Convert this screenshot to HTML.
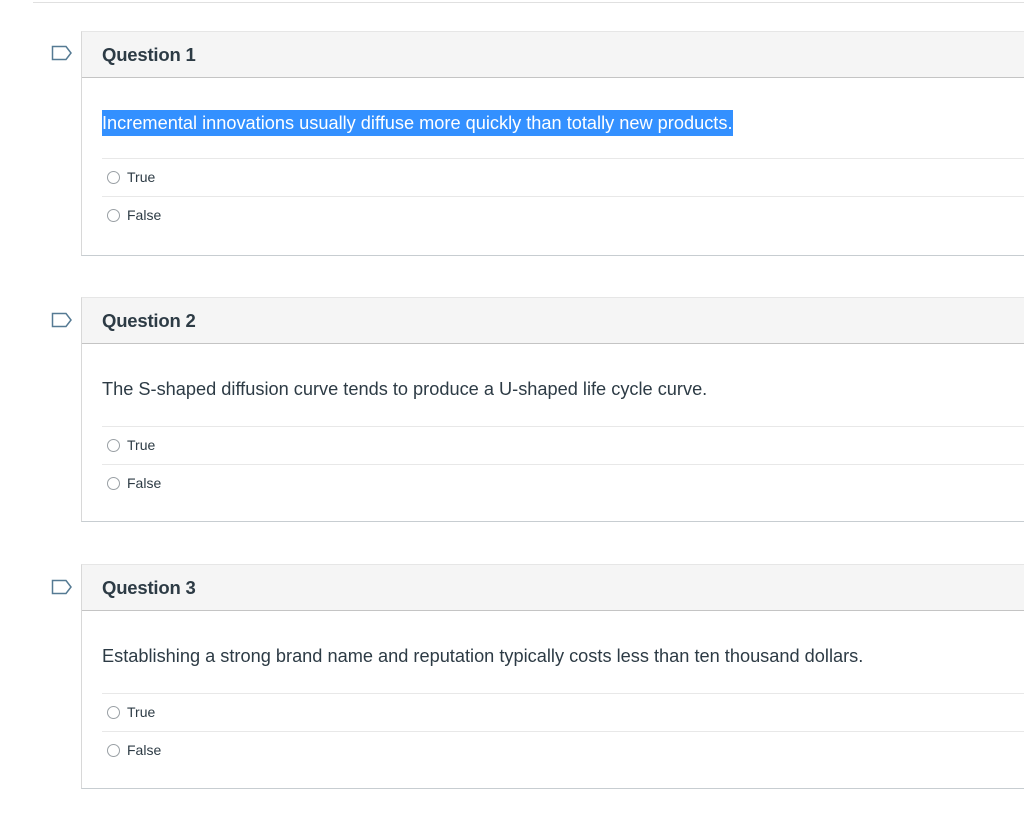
<!DOCTYPE html>
<html><head><meta charset="utf-8"><style>
body{margin:0;background:#fff;font-family:"Liberation Sans",sans-serif;color:#2d3b45;}
.top{position:absolute;left:33px;top:2px;width:991px;height:1px;background:#e0e0e0}
.q{position:absolute;left:81px;width:943px;height:223px;border-left:1px solid #d8d8d8;border-top:1px solid #e6e6e6;border-bottom:1px solid #c7cdd1}
.hd{height:45px;background:#f5f5f5;border-bottom:1px solid #c4c4c4}
.hd span{position:absolute;left:20px;top:12px;font-size:18.5px;font-weight:bold;color:#2d3b45;letter-spacing:-0.2px}
.txt{position:absolute;left:20px;top:79px;font-size:18.2px;letter-spacing:0;line-height:24px;white-space:nowrap}
.sel{background:#3390ff;color:#fff;padding:3px 0}
.ans{position:absolute;left:20px;right:0;height:38px;border-top:1px solid #e8e8e8}
.ans i{position:absolute;left:5px;top:12px;width:13px;height:13px;border:1px solid #9aa0a5;border-radius:50%;box-sizing:border-box}
.ans b{position:absolute;left:25px;top:10px;font-weight:normal;font-size:14px}
.flag{position:absolute;left:51px}
</style></head><body>
<div class="top"></div>
<svg class="flag" style="top:45px" width="22" height="16"><path d="M1.5 1.5H15L20 8L15 14.5H1.5Z" fill="none" stroke="#557a93" stroke-width="1.5"/></svg>
<svg class="flag" style="top:312px" width="22" height="16"><path d="M1.5 1.5H15L20 8L15 14.5H1.5Z" fill="none" stroke="#557a93" stroke-width="1.5"/></svg>
<svg class="flag" style="top:579px" width="22" height="16"><path d="M1.5 1.5H15L20 8L15 14.5H1.5Z" fill="none" stroke="#557a93" stroke-width="1.5"/></svg>

<div class="q" style="top:31px">
<div class="hd"><span>Question 1</span></div>
<div class="txt"><span class="sel">Incremental innovations usually diffuse more quickly than totally new products.</span></div>
<div class="ans" style="top:126px"><i></i><b>True</b></div>
<div class="ans" style="top:164px"><i></i><b>False</b></div>
</div>

<div class="q" style="top:297px">
<div class="hd"><span>Question 2</span></div>
<div class="txt">The S-shaped diffusion curve tends to produce a U-shaped life cycle curve.</div>
<div class="ans" style="top:128px"><i></i><b>True</b></div>
<div class="ans" style="top:166px"><i></i><b>False</b></div>
</div>

<div class="q" style="top:564px">
<div class="hd"><span>Question 3</span></div>
<div class="txt">Establishing a strong brand name and reputation typically costs less than ten thousand dollars.</div>
<div class="ans" style="top:128px"><i></i><b>True</b></div>
<div class="ans" style="top:166px"><i></i><b>False</b></div>
</div>
</body></html>
